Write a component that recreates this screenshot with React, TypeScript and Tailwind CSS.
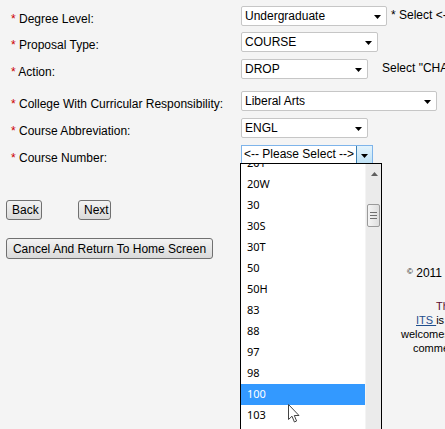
import React from 'react'

interface Row {
  label: string
  height: number
  width: number
  value: string
  note?: string
  noteGap?: number
}

const rows: Row[] = [
  { label: 'Degree Level:', height: 26, width: 146, value: 'Undergraduate', note: '* Select <--', noteGap: 4 },
  { label: 'Proposal Type:', height: 27, width: 137, value: 'COURSE' },
  { label: 'Action:', height: 32, width: 127, value: 'DROP', note: 'Select "CHANGE"', noteGap: 14 },
  { label: 'College With Curricular Responsibility:', height: 27, width: 196, value: 'Liberal Arts' },
  { label: 'Course Abbreviation:', height: 27, width: 127, value: 'ENGL' },
]

const courseNumbers = ['201', '20W', '30', '30S', '30T', '50', '50H', '83', '88', '97', '98', '100', '103', '104', '105']

function Arrow() {
  return (
    <svg width="7" height="4" viewBox="0 0 7 4" className="mt-[2px] shrink-0">
      <path d="M0 0 H7 L3.5 4 Z" fill="#000" />
    </svg>
  )
}

function Select({ width, value }: { width: number; value: string }) {
  return (
    <div
      className="flex h-[20px] shrink-0 items-center justify-between rounded-[2px] border border-[#c6c6c6] bg-white pl-[3px] pr-[5px]"
      style={{ width }}
    >
      <span className="whitespace-nowrap">{value}</span>
      <Arrow />
    </div>
  )
}

function Button({ children, className = '' }: { children: React.ReactNode; className?: string }) {
  return (
    <button
      className={`h-[20px] rounded-[3px] border border-[#707070] bg-gradient-to-b from-[#f3f3f3] to-[#dadada] px-[5px] leading-[18px] text-black ${className}`}
    >
      {children}
    </button>
  )
}

function Label({ text }: { text: string }) {
  return (
    <div className="w-[241px] shrink-0 pl-[11px] pt-[6px] leading-[14px] whitespace-nowrap">
      <span className="text-[#cc0000]">*</span> {text}
    </div>
  )
}

export default function App() {
  return (
    <div className="relative h-[429px] w-[445px] overflow-hidden bg-[#f4f4f4] font-['Liberation_Sans',Arial,sans-serif] text-[12px] text-black">
      {/* Form rows */}
      <div className="pt-[6px]">
        {rows.map((row) => (
          <div key={row.label} className="flex items-start" style={{ height: row.height }}>
            <Label text={row.label} />
            <Select width={row.width} value={row.value} />
            {row.note && (
              <span className="shrink-0 pt-[2px] leading-[14px] whitespace-nowrap" style={{ marginLeft: row.noteGap }}>
                {row.note}
              </span>
            )}
          </div>
        ))}
        <div className="flex h-[19px] items-start">
          <Label text="Course Number:" />
          <div className="flex h-[19px] w-[132px] shrink-0 items-stretch border border-[#7eb4ea] bg-white">
            <span className="flex-1 pl-[2px] leading-[17px] whitespace-nowrap">&lt;-- Please Select --&gt;</span>
            <div className="flex w-[16px] items-center justify-center border-l border-[#3c7fb1] bg-gradient-to-b from-[#e3f3fc] to-[#bfe2f6]">
              <Arrow />
            </div>
          </div>
        </div>
      </div>

      {/* Buttons */}
      <div className="mt-[36px] flex gap-[36px] pl-[6px]">
        <Button className="w-[36px]">Back</Button>
        <Button className="w-[33px]">Next</Button>
      </div>
      <div className="mt-[18px] pl-[6px]">
        <Button className="h-[21px] w-[207px] whitespace-nowrap">Cancel And Return To Home Screen</Button>
      </div>

      {/* Footer */}
      <div className="mt-[7px] whitespace-nowrap">
        <div className="pl-[407px] leading-[14px]">
          <span className="relative top-[-3px] text-[8px]">©</span> 2011
        </div>
        <div className="mt-[17px] text-[11px] leading-[14px]">
          <div className="pl-[436px] text-[#5a0a2e]">The</div>
          <div className="pl-[416px]">
            <span className="text-[#1f4e8c] underline">ITS </span>is
          </div>
          <div className="pl-[401px]">welcomes</div>
          <div className="pl-[413px]">comments</div>
        </div>
      </div>

      {/* Open dropdown list */}
      <div className="absolute left-[240px] top-[163px] flex h-[270px] w-[142px] overflow-hidden border border-black bg-white font-['Noto_Sans',sans-serif] text-[11px]">
        <div className="flex-1 overflow-hidden">
          <div className="mt-[-11px]">
            {courseNumbers.map((n) => (
              <div
                key={n}
                className={`flex h-[21px] items-center pl-[6px] ${n === '100' ? 'bg-[#3399ff] text-white' : 'text-black'}`}
              >
                {n}
              </div>
            ))}
          </div>
        </div>
        <div className="relative w-[16px] border-l border-[#f4f4f4] bg-[#ebebeb]">
          <svg width="7" height="4" viewBox="0 0 7 4" className="absolute left-[5px] top-[8px]">
            <path d="M3.5 0 L7 4 H0 Z" fill="#5f5f5f" />
          </svg>
          <div className="absolute left-[1px] top-[40px] flex h-[23px] w-[13px] flex-col items-center justify-center gap-[2px] rounded-[2px] border border-[#9a9a9a] bg-gradient-to-r from-[#f5f5f5] to-[#dedede]">
            <div className="h-px w-[7px] bg-[#6f6f6f]" />
            <div className="h-px w-[7px] bg-[#6f6f6f]" />
            <div className="h-px w-[7px] bg-[#6f6f6f]" />
          </div>
        </div>
      </div>

      {/* Mouse cursor */}
      <svg width="13" height="20" viewBox="0 0 13 20" className="absolute left-[288px] top-[404px]">
        <path d="M0.5 0.5 L0.5 15.5 L4 12.2 L6.4 18 L8.6 17 L6.3 11.5 L11 11.5 Z" fill="#fff" stroke="#444" strokeWidth="1" strokeLinejoin="round" />
      </svg>
    </div>
  )
}
